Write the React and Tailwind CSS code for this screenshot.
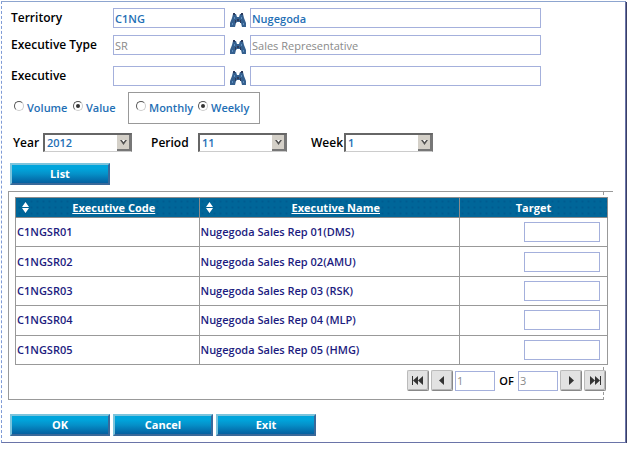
import React from "react";

const rows = [
  ["C1NGSR01", "Nugegoda Sales Rep 01(DMS)"],
  ["C1NGSR02", "Nugegoda Sales Rep 02(AMU)"],
  ["C1NGSR03", "Nugegoda Sales Rep 03 (RSK)"],
  ["C1NGSR04", "Nugegoda Sales Rep 04 (MLP)"],
  ["C1NGSR05", "Nugegoda Sales Rep 05 (HMG)"],
];

const fieldBase =
  "h-5 min-w-0 rounded-none border border-[#a4b0dc] bg-white px-px text-[11px] outline-none";

function Binoculars() {
  return (
    <svg width="16" height="15" viewBox="0 0 16 15" aria-hidden="true">
      <path d="M3 1h3l1 3h2l1-3h3l1 4 2 5v4h-4l-1-4-1-1H7l-1 1-1 4H1l-1 0v-4l2-5z" fill="#35608f" />
      <path d="M4 4h1v2H4zM11 4h1v2h-1zM2 10h1v2H2zM13 10h1v2h-1z" fill="#5f8fc0" />
      <path d="M3 0h2v2H3zM11 0h2v2h-2zM5 7h1v3H5zM10 7h1v3h-1zM7 6h2v2H7z" fill="#2c3a5c" />
    </svg>
  );
}

function LookupRow({ id, label, code, name, disabled, className }) {
  const color = disabled ? "text-[#8a8a8a]" : "font-semibold text-[#1f6fb5]";
  return (
    <div className={`flex items-center ${className}`}>
      <label htmlFor={id} className="w-[102px] shrink-0 text-xs font-semibold text-black">
        {label}
      </label>
      <input id={id} defaultValue={code} disabled={disabled} className={`${fieldBase} w-28 ${color}`} />
      <button type="button" aria-label={`Find ${label}`} className="mt-1 flex w-[25px] shrink-0 justify-center">
        <Binoculars />
      </button>
      <input
        aria-label={`${label} name`}
        defaultValue={name}
        disabled={disabled}
        className={`${fieldBase} mr-[84px] flex-1 ${color}`}
      />
    </div>
  );
}

function Radio({ name, label, checked, className }) {
  return (
    <label className={`flex items-center gap-[3px] font-semibold text-[#1f6fb5] ${className}`}>
      <span className="relative -mt-1 flex size-2.5 items-center justify-center">
        <input
          type="radio"
          name={name}
          defaultChecked={checked}
          className="peer size-2.5 appearance-none rounded-full border border-t-[#555] border-r-[#ccc] border-b-[#ccc] border-l-[#555] bg-white"
        />
        <span className="pointer-events-none absolute hidden size-1 rounded-full bg-[#333] peer-checked:block" />
      </span>
      {label}
    </label>
  );
}

function Picker({ id, label, value, labelClass }) {
  return (
    <div className="flex items-center">
      <label htmlFor={id} className={`text-xs font-semibold text-black ${labelClass}`}>
        {label}
      </label>
      <div className="relative w-[89px]">
        <select
          id={id}
          defaultValue={value}
          className="block h-[19px] w-full appearance-none rounded-none border-t-2 border-r border-b border-l-2 border-t-[#666] border-r-[#777] border-b-[#ccc] border-l-[#666] bg-white pl-0.5 text-[11px] font-semibold text-[#1f6fb5] outline-none"
        >
          <option>{value}</option>
        </select>
        <span className="pointer-events-none absolute top-0.5 right-px flex h-4 w-3.5 items-center justify-center border-r-2 border-b-2 border-[#777] bg-[#d4d0c8]">
          <svg width="7" height="5" viewBox="0 0 7 5" aria-hidden="true">
            <path d="M0 0h2l1.500 2L5 0h2L3.500 5z" fill="#555" />
            <path d="M2 0h3L3.500 2z" fill="#fff" />
          </svg>
        </span>
      </div>
    </div>
  );
}

function BlueButton({ children }) {
  return (
    <button
      type="button"
      className="h-[22px] w-[100px] border-2 border-t-[#7cc4dc] border-r-[#39699a] border-b-[#39699a] border-l-[#7cc4dc] bg-linear-to-b from-[#00a5dc] from-20% via-[#0590c8] via-50% to-[#0560a0] leading-4 font-bold text-white"
    >
      {children}
    </button>
  );
}

function SortIcon() {
  return (
    <svg width="7" height="11" viewBox="0 0 7 11" className="shrink-0" aria-hidden="true">
      <path d="M3.500 0L7 5H0zM0 6h7l-3.500 5z" fill="#fff" />
    </svg>
  );
}

function PagerButton({ label, children }) {
  return (
    <button
      type="button"
      aria-label={label}
      className="flex h-[21px] w-[22px] items-center justify-center rounded-xs border border-t-[#bbb] border-r-[#888] border-b-[#888] border-l-[#bbb] bg-[#e2e2e2] shadow-[inset_-1px_-1px_0_#b5b5b5]"
    >
      <svg width="14" height="11" viewBox="0 0 14 11" fill="#333" aria-hidden="true">
        {children}
      </svg>
    </button>
  );
}

const headCell =
  "border border-[#8c8c8c] bg-[#006699] bg-[radial-gradient(circle,#00558a_0.5px,transparent_1px)] bg-[size:6px_6px] p-0 leading-4 font-bold text-white";

export default function App() {
  return (
    <div className="pt-px pr-2 pl-px font-['Open_Sans','Noto_Sans',sans-serif] text-[11px] leading-4">
      <form
        className="border border-t-[#8da5cf] border-r-[#6a74a8] border-b-[#6a74a8] border-l-[#7f9bd6] bg-white pb-1.5 shadow-[1px_1px_0_#3a3f66] [border-left-style:dashed]"
        onSubmit={(e) => e.preventDefault()}
      >
        <LookupRow id="territory" label="Territory" code="C1NG" name="Nugegoda" className="mt-1.5 pl-[9px]" />
        <LookupRow
          id="exec-type"
          label="Executive Type"
          code="SR"
          name="Sales Representative"
          disabled
          className="mt-[7px] pl-[9px]"
        />
        <LookupRow id="executive" label="Executive" code="" name="" className="mt-[11px] pl-[9px]" />

        <div className="mt-1.5 flex items-center pl-3">
          <Radio name="measure" label="Volume" className="w-[59px]" />
          <Radio name="measure" label="Value" checked className="w-[55px]" />
          <div className="flex h-8 w-[132px] items-center border border-[#999] pl-[7px]">
            <Radio name="span" label="Monthly" className="w-[62px]" />
            <Radio name="span" label="Weekly" checked className="" />
          </div>
        </div>

        <div className="mt-[9px] flex pl-[11px]">
          <Picker id="year" label="Year" value="2012" labelClass="w-[30px]" />
          <Picker id="period" label="Period" value="11" labelClass="ml-[19px] w-[47px]" />
          <Picker id="week" label="Week" value="1" labelClass="ml-6 w-[33px]" />
        </div>

        <div className="mt-[11px] flex pl-2">
          <BlueButton>List</BlueButton>
        </div>

        <div className="mt-1.5 mr-3 ml-1.5 border-t border-[#999]">
          <div className="mr-[9px] border-r border-b border-l border-[#999] pt-[5px] pl-1.5 [border-right-style:dashed]">
            <div className="-mr-[5px]">
              <table className="h-[168px] w-full table-fixed border-collapse bg-white">
                <colgroup>
                  <col className="w-[31%]" />
                  <col className="w-[44%]" />
                  <col />
                </colgroup>
                <thead>
                  <tr className="h-5">
                    {["Executive Code", "Executive Name"].map((h) => (
                      <th key={h} className={headCell}>
                        <span className="flex items-center pl-1.5">
                          <SortIcon />
                          <span className="flex-1 text-center underline">{h}</span>
                        </span>
                      </th>
                    ))}
                    <th className={headCell}>Target</th>
                  </tr>
                </thead>
                <tbody>
                  {rows.map(([code, name]) => (
                    <tr key={code} className="font-semibold text-[#1c1c80]">
                      <td className="border border-[#999] p-0 pl-px">{code}</td>
                      <td className="border border-[#999] p-0 pl-px">{name}</td>
                      <td className="border border-[#999] p-0 pr-[7px]">
                        <input aria-label={`Target ${code}`} className={`${fieldBase} ml-auto block w-[76px]`} />
                      </td>
                    </tr>
                  ))}
                </tbody>
              </table>
              <div className="mt-[5px] mb-2 flex items-center justify-end gap-0.5 pr-0.5">
                <PagerButton label="First">
                  <path d="M1 1h1v9H1zM7 1v9L2 5.500zM12 1v9L7 5.500z" />
                </PagerButton>
                <PagerButton label="Previous">
                  <path d="M9 1v9L4 5.500z" />
                </PagerButton>
                <input aria-label="Page" defaultValue="1" className={`${fieldBase} w-10 text-[#8a8a8a]`} />
                <span className="w-[19px] text-center font-semibold text-black">OF</span>
                <input aria-label="Pages" defaultValue="3" readOnly className={`${fieldBase} w-10 text-[#8a8a8a]`} />
                <PagerButton label="Next">
                  <path d="M5 1v9l5-4.500z" />
                </PagerButton>
                <PagerButton label="Last">
                  <path d="M2 1v9l5-4.500zM7 1v9l5-4.500zM12 1h1v9h-1z" />
                </PagerButton>
              </div>
            </div>
          </div>
        </div>

        <div className="mt-3.5 flex gap-[3px] pl-2">
          <BlueButton>OK</BlueButton>
          <BlueButton>Cancel</BlueButton>
          <BlueButton>Exit</BlueButton>
        </div>
      </form>
    </div>
  );
}
